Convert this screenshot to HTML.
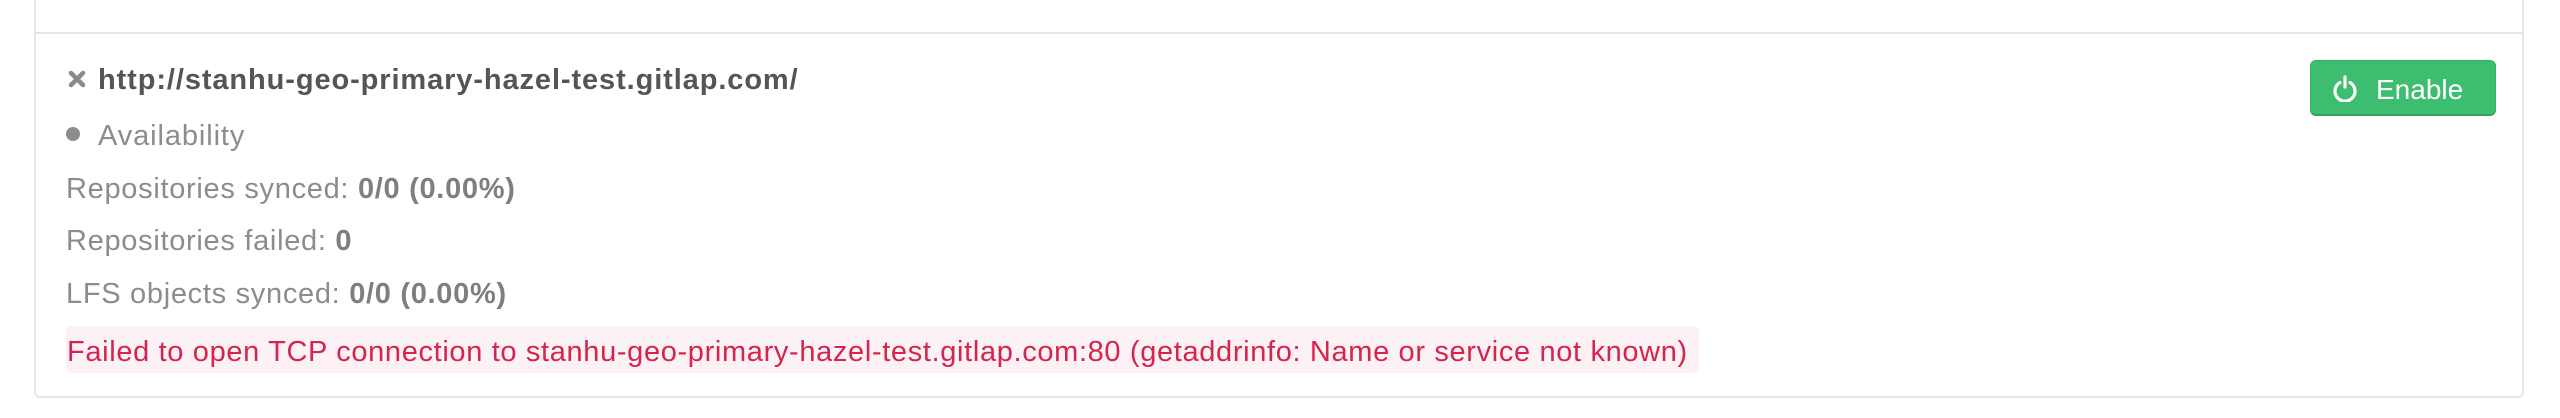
<!DOCTYPE html>
<html><head><meta charset="utf-8"><style>
html,body{margin:0;padding:0;background:#fff;width:2560px;height:418px;overflow:hidden;font-family:"Liberation Sans",sans-serif}
.card{position:absolute;left:34px;top:-10px;width:2490px;height:408px;border:2px solid #e5e5e5;border-radius:6px;box-sizing:border-box}
.div{position:absolute;left:36px;top:32px;width:2488px;height:2px;background:#e5e5e5}
.t{position:absolute;white-space:nowrap;font-size:29px;line-height:29px;color:#8c8c8c;letter-spacing:0.7px}
b{color:#7f7f7f}
.err{position:absolute;left:66px;top:326px;width:1633px;height:47px;background:#fcf1f4;border-radius:6px}
.btn{position:absolute;left:2310px;top:60px;width:186px;height:56px;background:#3dbd6f;border:1px solid #37ad65;border-bottom:2px solid #33a25e;border-radius:6px;box-sizing:border-box}
</style></head><body>
<div class="card"></div>
<div class="div"></div>
<svg style="position:absolute;left:68px;top:70px" width="18" height="18" viewBox="0 0 18 18"><path d="M3 3L15 15M15 3L3 15" stroke="#8a8a8a" stroke-width="4.5" stroke-linecap="round"/></svg>
<div class="t" style="left:98px;top:66px;font-weight:bold;color:#555;font-size:29px;letter-spacing:0.9px">http://stanhu-geo-primary-hazel-test.gitlap.com/</div>
<div style="position:absolute;left:66px;top:127px;width:14px;height:14px;border-radius:50%;background:#8c8c8c"></div>
<div class="t" style="left:98px;top:122px;letter-spacing:0.9px">Availability</div>
<div class="t" style="left:66px;top:175px">Repositories synced: <b>0/0 (0.00%)</b></div>
<div class="t" style="left:66px;top:227px">Repositories failed: <b>0</b></div>
<div class="t" style="left:66px;top:280px">LFS objects synced: <b>0/0 (0.00%)</b></div>
<div class="err"></div>
<div class="t" style="left:67px;top:338px;color:#d4244f;letter-spacing:0.65px">Failed to open TCP connection to stanhu-geo-primary-hazel-test.gitlap.com:80 (getaddrinfo: Name or service not known)</div>
<div class="btn"></div>
<svg style="position:absolute;left:2332px;top:74px" width="26" height="28" viewBox="0 0 26 28"><path d="M8 8.5A10 10 0 1 0 18 8.5" fill="none" stroke="#fff" stroke-width="3.2" stroke-linecap="round"/><path d="M13 3V13" stroke="#fff" stroke-width="3.2" stroke-linecap="round"/></svg>
<div class="t" style="left:2376px;top:76px;color:#fff;font-size:28px;line-height:28px;letter-spacing:0">Enable</div>
</body></html>
